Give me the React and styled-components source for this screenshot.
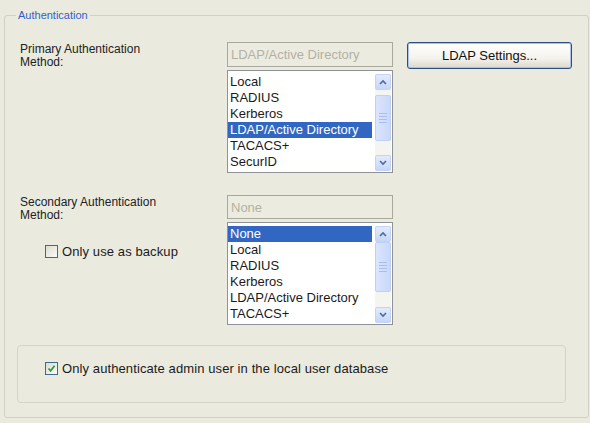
import React from 'react'
import styled, { createGlobalStyle } from 'styled-components'

const GlobalStyle = createGlobalStyle`
  html, body {
    margin: 0;
    padding: 0;
    background: #ebeadf;
  }
  body {
    font-family: "Liberation Sans", Arial, sans-serif;
    color: #111;
  }
`

const Page = styled.div`
  width: 590px;
  height: 423px;
  box-sizing: border-box;
  padding: 9px 2px 0 4px;
  background: #ebeadf;
`

const GroupBox = styled.fieldset`
  margin: 0;
  width: 585px;
  box-sizing: border-box;
  border: 1px solid #d3d1c3;
  border-radius: 3px;
  padding: 20px 12px 14px 12px;
  min-width: 0;
`

const Legend = styled.legend`
  margin-left: -1px;
  padding: 0 2px;
  font-size: 11px;
  line-height: 13px;
  color: #2f62cc;
`

const Row = styled.div`
  display: flex;
  align-items: flex-start;
  margin-top: ${(p) => p.$top || 0}px;
`

const LabelColumn = styled.div`
  width: 210px;
  flex: none;
  padding-left: 3px;
  box-sizing: border-box;
`

const FieldLabel = styled.div`
  padding-top: 1px;
  font-size: 12px;
  line-height: 13px;
  color: #222;
`

const ComboColumn = styled.div`
  width: 166px;
  flex: none;
  display: flex;
  flex-direction: column;
  gap: 3px;
`

const DisabledField = styled.div`
  height: ${(p) => p.$height}px;
  box-sizing: border-box;
  border: 1px solid #a9a89c;
  background: #ecebe0;
  color: #b3b1a3;
  font-size: 13px;
  padding: 0 3px;
  display: flex;
  align-items: center;
`

const ListBox = styled.div`
  height: 103px;
  box-sizing: border-box;
  border: 1px solid #8f9397;
  background: #fff;
  display: flex;
  padding: 3px 1px 1px 0;
`

const Items = styled.div`
  flex: 1;
  overflow: hidden;
  margin-right: 3px;
`

const Item = styled.div`
  height: 16px;
  line-height: 16px;
  font-size: 13px;
  padding-left: 2px;
  white-space: nowrap;
  color: ${(p) => (p.$selected ? '#fff' : '#1a1a1a')};
  background: ${(p) => (p.$selected ? '#3167c2' : 'transparent')};
`

const ScrollBar = styled.div`
  width: 16px;
  flex: none;
  display: flex;
  flex-direction: column;
  background: #f4f4f0;
`

const ScrollButton = styled.div`
  height: 16px;
  box-sizing: border-box;
  border: 1px solid #c3d3f7;
  border-radius: 2px;
  background: linear-gradient(#e3ebfd, #c6d6fb);
  display: flex;
  align-items: center;
  justify-content: center;
`

const Track = styled.div`
  flex: 1;
  position: relative;
`

const Thumb = styled.div`
  position: absolute;
  left: 0;
  right: 0;
  box-sizing: border-box;
  border: 1px solid #c0d0f5;
  border-radius: 2px;
  background: linear-gradient(90deg, #dbe5fd, #c9d8fb);
  display: flex;
  flex-direction: column;
  align-items: center;
  justify-content: center;
  gap: 2px;
`

const Grip = styled.div`
  width: 8px;
  height: 1px;
  background: #a9bdf0;
`

const SettingsButton = styled.button`
  margin-left: 14px;
  width: 165px;
  height: 27px;
  border: 1px solid #2b4f7e;
  border-radius: 3px;
  box-shadow: inset 0 0 0 1px #a9c2ea;
  background: linear-gradient(#ffffff 0%, #f4f3ee 60%, #dcd9cc 100%);
  font-family: "Liberation Sans", Arial, sans-serif;
  font-size: 13px;
  color: #111;
  padding: 0;
`

const CheckRow = styled.label`
  display: flex;
  align-items: center;
  gap: 4px;
  margin: ${(p) => p.$margin};
  font-size: 13px;
  letter-spacing: 0.1px;
  color: #1a1a1a;
`

const Box = styled.span`
  width: 13px;
  height: 13px;
  flex: none;
  box-sizing: border-box;
  border: 1px solid #3d6a8e;
  background: linear-gradient(135deg, #dcdcd4, #fbfbf8);
  display: flex;
  align-items: center;
  justify-content: center;
`

const InnerBox = styled.div`
  margin-top: 20px;
  height: 58px;
  width: 549px;
  box-sizing: border-box;
  border: 1px solid #d6d4c7;
  border-radius: 4px;
  padding: 15px 0 0 27px;
`

const Arrow = ({ up }) => (
  <svg width="8" height="6" viewBox="0 0 8 6">
    <path
      d={up ? 'M1 5 L4 2 L7 5' : 'M1 1 L4 4 L7 1'}
      fill="none"
      stroke="#4d6a9e"
      strokeWidth="1.6"
    />
  </svg>
)

const List = ({ items, selected, thumbTop, thumbHeight }) => (
  <ListBox>
    <Items>
      {items.map((it) => (
        <Item key={it} $selected={it === selected}>
          {it}
        </Item>
      ))}
    </Items>
    <ScrollBar>
      <ScrollButton>
        <Arrow up />
      </ScrollButton>
      <Track>
        <Thumb style={{ top: thumbTop, height: thumbHeight }}>
          <Grip />
          <Grip />
          <Grip />
          <Grip />
        </Thumb>
      </Track>
      <ScrollButton>
        <Arrow />
      </ScrollButton>
    </ScrollBar>
  </ListBox>
)

const CheckBox = ({ checked, children, margin }) => (
  <CheckRow $margin={margin}>
    <Box>
      {checked && (
        <svg width="9" height="9" viewBox="0 0 9 9">
          <path d="M1.5 4.5 L3.6 6.8 L7.6 1.8" fill="none" stroke="#2aa13a" strokeWidth="1.8" />
        </svg>
      )}
    </Box>
    {children}
  </CheckRow>
)

const primaryItems = ['Local', 'RADIUS', 'Kerberos', 'LDAP/Active Directory', 'TACACS+', 'SecurID']
const secondaryItems = ['None', 'Local', 'RADIUS', 'Kerberos', 'LDAP/Active Directory', 'TACACS+']

const App = () => (
  <Page>
    <GlobalStyle />
    <GroupBox>
      <Legend>Authentication</Legend>
      <Row>
        <LabelColumn>
          <FieldLabel>
            Primary Authentication
            <br />
            Method:
          </FieldLabel>
        </LabelColumn>
        <ComboColumn>
          <DisabledField $height={25}>LDAP/Active Directory</DisabledField>
          <List items={primaryItems} selected="LDAP/Active Directory" thumbTop={5} thumbHeight={46} />
        </ComboColumn>
        <SettingsButton>LDAP Settings...</SettingsButton>
      </Row>
      <Row $top={22}>
        <LabelColumn>
          <FieldLabel>
            Secondary Authentication
            <br />
            Method:
          </FieldLabel>
          <CheckBox margin="22px 0 0 25px">Only use as backup</CheckBox>
        </LabelColumn>
        <ComboColumn>
          <DisabledField $height={24}>None</DisabledField>
          <List items={secondaryItems} selected="None" thumbTop={0} thumbHeight={50} />
        </ComboColumn>
      </Row>
      <InnerBox>
        <CheckBox checked margin="0">
          Only authenticate admin user in the local user database
        </CheckBox>
      </InnerBox>
    </GroupBox>
  </Page>
)

export default App
